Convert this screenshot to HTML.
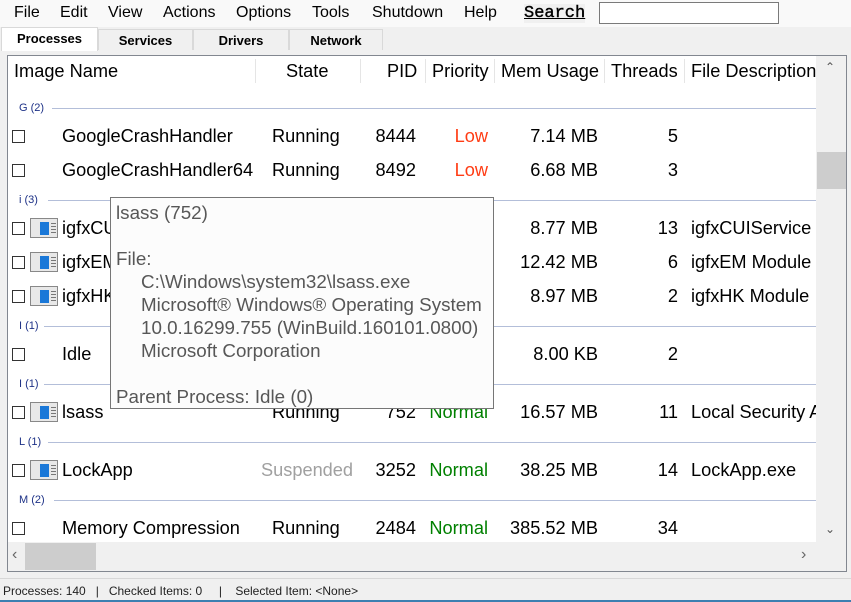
<!DOCTYPE html>
<html><head><meta charset="utf-8"><style>
*{margin:0;padding:0;box-sizing:border-box}
body{width:851px;height:602px;background:#f0f0f0;font-family:"Liberation Sans",sans-serif;position:relative;overflow:hidden;color:#000}
.a{position:absolute;white-space:nowrap}
.menu{font-size:16px;top:4px}
.tab{position:absolute;top:29px;height:21px;font:bold 13px "Liberation Sans",sans-serif;text-align:center;line-height:21px;border:1px solid #d9d9d9;border-bottom:none;background:#f0f0f0}
.list{position:absolute;left:7px;top:55px;width:840px;height:517px;border:1px solid #828790;background:#fff;overflow:hidden}
.t{position:absolute;font-size:18.2px;line-height:22px;white-space:nowrap}
.r{text-align:right}
.g{position:absolute;font-size:11px;color:#1e3287;line-height:14px}
.gl{position:absolute;height:1px;background:#b3bed9}
.cb{position:absolute;left:4px;width:13px;height:13px;border:1px solid #333;background:#fff}
.ic{position:absolute;left:22px;width:28px;height:20px;border:1px solid #888;background:#e8e8e8}
.ic:before{content:"";position:absolute;left:9px;top:3px;width:9px;height:13px;background:#1a78d8}
.ic:after{content:"";position:absolute;left:20px;top:4px;width:5px;height:10px;background:repeating-linear-gradient(#777 0 1px,transparent 1px 3px)}
.hd{position:absolute;top:1px;height:28px;font-size:18px;line-height:28px;background:#fff}
.sep{position:absolute;top:3px;width:1px;height:24px;background:#e5e5e5}
</style></head><body>
<div class="a" style="left:0;top:0;width:851px;height:27px;background:#f9f9f9"></div>
<span class="a menu" style="left:14px">File</span>
<span class="a menu" style="left:60px">Edit</span>
<span class="a menu" style="left:108px">View</span>
<span class="a menu" style="left:163px">Actions</span>
<span class="a menu" style="left:236px">Options</span>
<span class="a menu" style="left:312px">Tools</span>
<span class="a menu" style="left:372px">Shutdown</span>
<span class="a menu" style="left:464px">Help</span>
<span class="a" style="left:524px;top:4px;font:17px 'Liberation Mono',monospace;text-decoration:underline;background:#f0f0f0;-webkit-text-stroke:0.4px #000">Search</span>
<div class="a" style="left:599px;top:2px;width:180px;height:22px;border:1px solid #7a7a7a;background:#fff"></div>
<div class="tab" style="left:1px;top:27px;height:24px;width:97px;background:#fff;line-height:22px">Processes</div>
<div class="tab" style="left:98px;width:95px">Services</div>
<div class="tab" style="left:193px;width:96px">Drivers</div>
<div class="tab" style="left:289px;width:94px">Network</div>
<div class="list">
 <div class="hd" style="left:0;width:808px"></div>
 <span class="t" style="left:6px;top:4px">Image Name</span>
 <div class="sep" style="left:247px"></div>
 <span class="t" style="left:278px;top:4px">State</span>
 <div class="sep" style="left:352px"></div>
 <span class="t" style="left:379px;top:4px">PID</span>
 <div class="sep" style="left:417px"></div>
 <span class="t" style="left:424px;top:4px">Priority</span>
 <div class="sep" style="left:486px"></div>
 <span class="t" style="left:493px;top:4px">Mem Usage</span>
 <div class="sep" style="left:596px"></div>
 <span class="t" style="left:603px;top:4px">Threads</span>
 <div class="sep" style="left:676px"></div>
 <span class="t" style="left:683px;top:4px">File Description</span>

 <span class="g" style="left:11px;top:45px">G (2)</span><div class="gl" style="left:44px;top:52px;width:764px"></div>
 <span class="g" style="left:11px;top:137px">i (3)</span><div class="gl" style="left:40px;top:144px;width:768px"></div>
 <span class="g" style="left:11px;top:263px">I (1)</span><div class="gl" style="left:36px;top:270px;width:772px"></div>
 <span class="g" style="left:11px;top:321px">I (1)</span><div class="gl" style="left:36px;top:328px;width:772px"></div>
 <span class="g" style="left:11px;top:379px">L (1)</span><div class="gl" style="left:40px;top:386px;width:768px"></div>
 <span class="g" style="left:11px;top:437px">M (2)</span><div class="gl" style="left:46px;top:444px;width:762px"></div>

 <div class="cb" style="top:74px"></div><span class="t" style="left:54px;top:69px">GoogleCrashHandler</span><span class="t" style="left:264px;top:69px">Running</span><span class="t r" style="right:430px;top:69px">8444</span><span class="t r" style="right:358px;top:69px;color:#ff3c14">Low</span><span class="t r" style="right:248px;top:69px">7.14 MB</span><span class="t r" style="right:168px;top:69px">5</span>
 <div class="cb" style="top:108px"></div><span class="t" style="left:54px;top:103px">GoogleCrashHandler64</span><span class="t" style="left:264px;top:103px">Running</span><span class="t r" style="right:430px;top:103px">8492</span><span class="t r" style="right:358px;top:103px;color:#ff3c14">Low</span><span class="t r" style="right:248px;top:103px">6.68 MB</span><span class="t r" style="right:168px;top:103px">3</span>
 <div class="cb" style="top:166px"></div><div class="ic" style="top:162px"></div><span class="t" style="left:54px;top:161px">igfxCUI</span><span class="t r" style="right:248px;top:161px">8.77 MB</span><span class="t r" style="right:168px;top:161px">13</span><span class="t" style="left:683px;top:161px">igfxCUIService</span>
 <div class="cb" style="top:200px"></div><div class="ic" style="top:196px"></div><span class="t" style="left:54px;top:195px">igfxEM</span><span class="t r" style="right:248px;top:195px">12.42 MB</span><span class="t r" style="right:168px;top:195px">6</span><span class="t" style="left:683px;top:195px">igfxEM Module</span>
 <div class="cb" style="top:234px"></div><div class="ic" style="top:230px"></div><span class="t" style="left:54px;top:229px">igfxHK</span><span class="t r" style="right:248px;top:229px">8.97 MB</span><span class="t r" style="right:168px;top:229px">2</span><span class="t" style="left:683px;top:229px">igfxHK Module</span>
 <div class="cb" style="top:292px"></div><span class="t" style="left:54px;top:287px">Idle</span><span class="t r" style="right:248px;top:287px">8.00 KB</span><span class="t r" style="right:168px;top:287px">2</span>
 <div class="cb" style="top:350px"></div><div class="ic" style="top:346px"></div><span class="t" style="left:54px;top:345px">lsass</span><span class="t" style="left:264px;top:345px">Running</span><span class="t r" style="right:430px;top:345px">752</span><span class="t r" style="right:358px;top:345px;color:#008000">Normal</span><span class="t r" style="right:248px;top:345px">16.57 MB</span><span class="t r" style="right:168px;top:345px">11</span><span class="t" style="left:683px;top:345px">Local Security A</span>
 <div class="cb" style="top:408px"></div><div class="ic" style="top:404px"></div><span class="t" style="left:54px;top:403px">LockApp</span><span class="t" style="left:253px;top:403px;color:#a0a0a0">Suspended</span><span class="t r" style="right:430px;top:403px">3252</span><span class="t r" style="right:358px;top:403px;color:#008000">Normal</span><span class="t r" style="right:248px;top:403px">38.25 MB</span><span class="t r" style="right:168px;top:403px">14</span><span class="t" style="left:683px;top:403px">LockApp.exe</span>
 <div class="cb" style="top:466px"></div><span class="t" style="left:54px;top:461px">Memory Compression</span><span class="t" style="left:264px;top:461px">Running</span><span class="t r" style="right:430px;top:461px">2484</span><span class="t r" style="right:358px;top:461px;color:#008000">Normal</span><span class="t r" style="right:248px;top:461px">385.52 MB</span><span class="t r" style="right:168px;top:461px">34</span>

 <div class="a" style="left:808px;top:0;width:31px;height:486px;background:#f0f0f0"></div>
 <span class="a" style="left:817px;top:4px;font-size:12px;color:#555">&#8963;</span>
 <div class="a" style="left:809px;top:96px;width:29px;height:37px;background:#cdcdcd"></div>
 <span class="a" style="left:817px;top:466px;font-size:12px;color:#555">&#8964;</span>
 <div class="a" style="left:0;top:486px;width:839px;height:30px;background:#f0f0f0"></div>
 <span class="a" style="left:4px;top:490px;font-size:16px;color:#666">&#8249;</span>
 <div class="a" style="left:17px;top:487px;width:71px;height:27px;background:#cdcdcd"></div>
 <span class="a" style="left:793px;top:490px;font-size:16px;color:#666">&#8250;</span>
</div>
<div class="a" style="left:110px;top:197px;width:384px;height:212px;background:#fcfcfc;border:1px solid #767676;color:#575757;font-size:18.8px;line-height:23px;padding:3px 0 0 5px">
<div>lsass (752)</div><div>&nbsp;</div><div>File:</div>
<div style="padding-left:25px">C:\Windows\system32\lsass.exe</div>
<div style="padding-left:25px">Microsoft® Windows® Operating System</div>
<div style="padding-left:25px">10.0.16299.755 (WinBuild.160101.0800)</div>
<div style="padding-left:25px">Microsoft Corporation</div><div>&nbsp;</div>
<div>Parent Process: Idle (0)</div>
</div>
<div class="a" style="left:0;top:578px;width:851px;height:1px;background:#d7d7d7"></div>
<span class="a" style="left:3px;top:584px;font-size:12px;color:#222">Processes: 140 &nbsp; | &nbsp; Checked Items: 0 &nbsp; &nbsp; | &nbsp; &nbsp;Selected Item: &lt;None&gt;</span>
<div class="a" style="left:0;top:600px;width:851px;height:2px;background:#3c7fb1"></div>
</body></html>
